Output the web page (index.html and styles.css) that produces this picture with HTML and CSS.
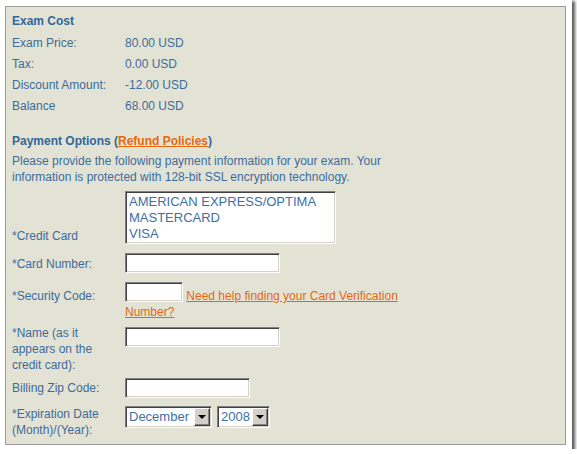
FILE: index.html
```html
<!DOCTYPE html>
<html lang="en">
<head>
  <meta charset="UTF-8">
  <meta name="viewport" content="width=device-width, initial-scale=1.0">
  <title>Exam Payment</title>
  <link rel="stylesheet" href="styles.css">
</head>
<body>
  <div class="frame">
    <div class="panel">
      <!-- Exam cost summary -->
      <h2 class="title">Exam Cost</h2>
      <div class="cost">
        <span>Exam Price:</span><span>80.00 USD</span>
        <span>Tax:</span><span>0.00 USD</span>
        <span>Discount Amount:</span><span>-12.00 USD</span>
        <span>Balance</span><span>68.00 USD</span>
      </div>

      <!-- Payment form -->
      <h2 class="subtitle">Payment Options (<a href="#" class="link strong">Refund Policies</a>)</h2>
      <p class="note">Please provide the following payment information for your exam. Your information is protected with 128-bit SSL encryption technology.</p>

      <form class="form">
        <div class="row row-bottom">
          <label for="cardType">*Credit Card</label>
          <select id="cardType" class="listbox" size="3">
            <option>AMERICAN EXPRESS/OPTIMA</option>
            <option>MASTERCARD</option>
            <option>VISA</option>
          </select>
        </div>

        <div class="row row-number">
          <label for="cardNumber">*Card Number:</label>
          <input type="text" id="cardNumber" class="field field-long">
        </div>

        <div class="row row-security">
          <label for="securityCode">*Security Code:</label>
          <div class="value">
            <input type="text" id="securityCode" class="field field-short"> <a href="#" class="link">Need help finding your Card Verification Number?</a>
          </div>
        </div>

        <div class="row row-top row-name">
          <label for="holderName">*Name (as it appears on the credit card):</label>
          <input type="text" id="holderName" class="field field-long field-name" autofocus>
        </div>

        <div class="row row-zip">
          <label for="zip">Billing Zip Code:</label>
          <input type="text" id="zip" class="field field-mid">
        </div>

        <div class="row row-top row-exp">
          <label for="expMonth">*Expiration Date (Month)/(Year):</label>
          <div class="value selects">
            <span class="dropdown dropdown-month">
              <select id="expMonth">
                <option>January</option>
                <option>February</option>
                <option>March</option>
                <option>April</option>
                <option>May</option>
                <option>June</option>
                <option>July</option>
                <option>August</option>
                <option>September</option>
                <option>October</option>
                <option>November</option>
                <option selected>December</option>
              </select>
            </span>
            <span class="dropdown dropdown-year">
              <select id="expYear">
                <option selected>2008</option>
                <option>2009</option>
                <option>2010</option>
                <option>2011</option>
                <option>2012</option>
              </select>
            </span>
          </div>
        </div>
      </form>
    </div>
  </div>
</body>
</html>
```

FILE: styles.css
```css
body {
  margin: 0;
  padding: 0;
  background-color: #ffffff;
  font-family: "Liberation Sans", Arial, sans-serif;
  font-size: 12px;
  color: #3d6b9b;
}

.frame {
  width: 572px;
  height: 449px;
  padding: 6px 0 0 5px;
  box-sizing: border-box;
  background: #ffffff;
  box-shadow: 2px 2px 3px 1px rgba(0, 0, 0, 0.65);
}

.panel {
  width: 561px;
  height: 439px;
  box-sizing: border-box;
  padding: 4px 6px 0 6px;
  background-color: #e3e3d5;
  border: 1px solid #9a9a9a;
}

.title,
.subtitle {
  margin: 0;
  font-size: 12px;
  font-weight: bold;
  color: #336699;
}

.title {
  line-height: 21px;
}

.subtitle {
  margin-top: 17px;
  line-height: 16px;
}

.cost {
  display: grid;
  grid-template-columns: 113px auto;
  grid-auto-rows: 21px;
  align-items: center;
}

.link {
  color: #e8670c;
  text-decoration: underline;
}

.strong {
  font-weight: bold;
}

.note {
  width: 410px;
  margin: 4px 0 6px 0;
  line-height: 16px;
}

.form {
  width: 410px;
  margin: 0;
}

.row {
  display: flex;
  align-items: baseline;
}

.row label {
  flex: 0 0 108px;
  padding-right: 5px;
  line-height: 16px;
}

.row-bottom {
  align-items: flex-end;
}

.row-top {
  align-items: flex-start;
}

.row-number {
  margin-top: 9px;
}

.row-security {
  margin-top: 9px;
}

.row-name {
  margin-top: 5px;
}

.row-zip {
  margin-top: 5px;
}

.row-exp {
  margin-top: 8px;
}

.value {
  flex: 1;
  line-height: 16px;
}

.selects {
  display: flex;
  gap: 5px;
}

/* classic sunken controls */
.field,
.listbox,
.dropdown select {
  box-sizing: border-box;
  border: 1px solid;
  border-color: #808080 #ffffff #ffffff #808080;
  box-shadow: inset 1px 1px #404040, inset -1px -1px #d4d0c8;
  background: #ffffff;
  font-family: "Liberation Sans", Arial, sans-serif;
  font-size: 13px;
  color: #3d6fa6;
  border-radius: 0;
  outline: none;
}

.field {
  height: 20px;
  padding: 1px 3px;
  margin: 0;
}

.field-long {
  width: 155px;
}

.field-mid {
  width: 125px;
}

.field-short {
  width: 58px;
  vertical-align: 3px;
}

.field-name {
  margin-top: 2px;
}

.listbox {
  width: 211px;
  height: 53px;
  padding: 2px 3px;
  margin: 0;
  overflow: hidden;
}

.listbox option {
  padding: 0;
  line-height: 16px;
  min-height: 16px;
}

.dropdown {
  position: relative;
  display: block;
  height: 22px;
}

.dropdown select {
  appearance: none;
  -webkit-appearance: none;
  width: 100%;
  height: 22px;
  padding: 0 18px 0 3px;
  margin: 0;
}

.dropdown-month {
  width: 87px;
}

.dropdown-year {
  width: 53px;
}

.dropdown::before {
  content: "";
  position: absolute;
  top: 2px;
  right: 2px;
  width: 16px;
  height: 18px;
  box-sizing: border-box;
  background: #d4d0c8;
  border: 1px solid;
  border-color: #ffffff #404040 #404040 #ffffff;
  box-shadow: inset -1px -1px #808080;
  pointer-events: none;
}

.dropdown::after {
  content: "";
  position: absolute;
  top: 9px;
  right: 6px;
  width: 0;
  height: 0;
  border-top: 4px solid #000000;
  border-left: 4px solid transparent;
  border-right: 4px solid transparent;
  pointer-events: none;
}
```
